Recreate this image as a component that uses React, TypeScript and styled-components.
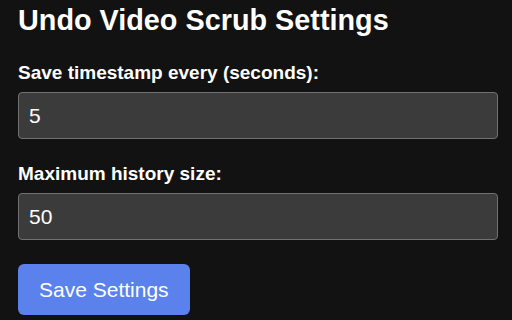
import React from "react";
import styled, { createGlobalStyle } from "styled-components";

const GlobalStyle = createGlobalStyle`
  html, body {
    margin: 0;
    padding: 0;
    background: #121212;
  }
  body {
    font-family: "Liberation Sans", Arial, sans-serif;
    color: #ffffff;
  }
`;

const Page = styled.main`
  box-sizing: border-box;
  width: 512px;
  height: 320px;
  padding: 3px 18px 0;
`;

const Title = styled.h1`
  margin: 0 0 25px;
  font-size: 28.8px;
  line-height: 34px;
  font-weight: 700;
`;

const Field = styled.div`
  display: flex;
  flex-direction: column;
  gap: 8px;
  margin-bottom: 24px;
`;

const Label = styled.label`
  font-size: 19px;
  line-height: 22px;
  font-weight: 700;
`;

const Input = styled.input`
  box-sizing: border-box;
  width: 480px;
  height: 47px;
  padding: 0 10px;
  background: #3b3b3b;
  border: 1.5px solid #717171;
  border-radius: 4px;
  color: #ffffff;
  font-family: "Liberation Sans", Arial, sans-serif;
  font-size: 21px;
  outline: none;
`;

const SaveButton = styled.button`
  box-sizing: border-box;
  height: 51px;
  padding: 0 21px;
  border: none;
  border-radius: 6px;
  background: #5b82ec;
  color: #ffffff;
  font-family: "Liberation Sans", Arial, sans-serif;
  font-size: 21px;
  cursor: pointer;
`;

export default function App() {
  return (
    <>
      <GlobalStyle />
      <Page>
        <Title>Undo Video Scrub Settings</Title>
        <Field>
          <Label htmlFor="interval">Save timestamp every (seconds):</Label>
          <Input id="interval" type="text" defaultValue="5" />
        </Field>
        <Field>
          <Label htmlFor="history">Maximum history size:</Label>
          <Input id="history" type="text" defaultValue="50" />
        </Field>
        <SaveButton>Save Settings</SaveButton>
      </Page>
    </>
  );
}
